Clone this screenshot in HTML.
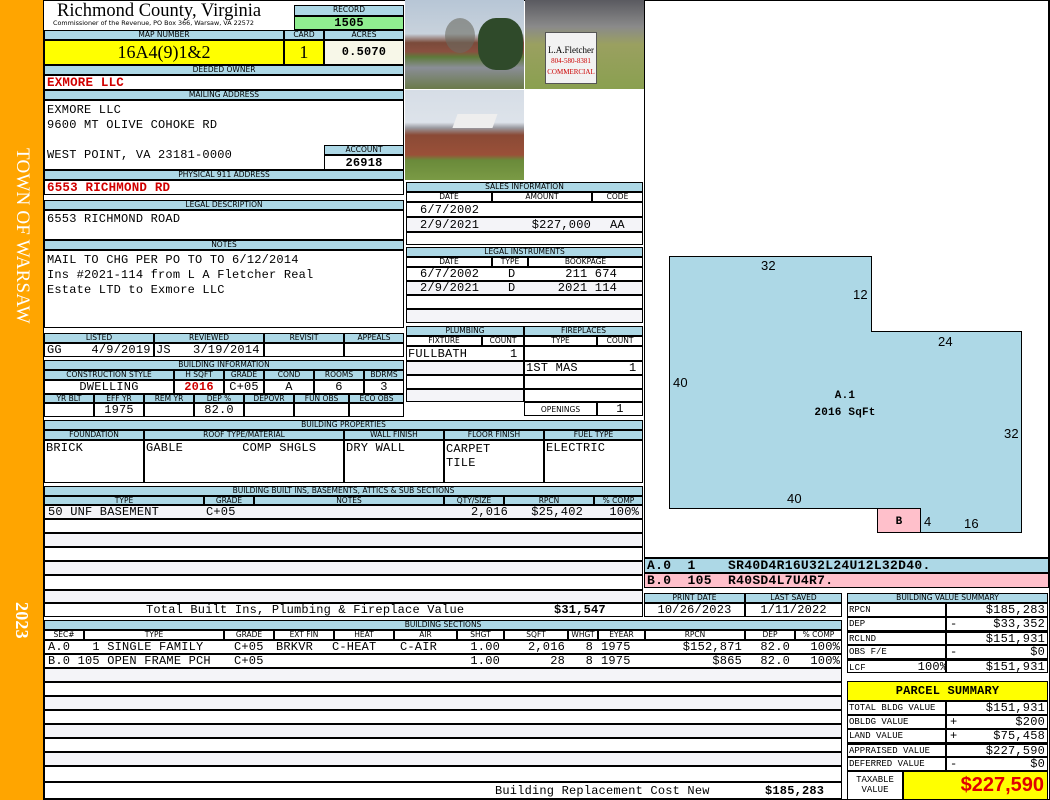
<!DOCTYPE html>
<html><head><meta charset="utf-8"><style>
*{margin:0;padding:0;box-sizing:border-box}
body{width:1050px;height:800px;background:#fff;position:relative;overflow:hidden;font-family:"Liberation Mono",monospace;font-size:12px;letter-spacing:.2px;color:#000}
div{position:absolute}
.h{background:#add8e6;border:1px solid #000;font:7.5px "DejaVu Sans",sans-serif;letter-spacing:0;text-align:center;line-height:8px;white-space:nowrap;overflow:hidden}
.b{border:1px solid #000;background:#fff}
.s{background:#f4f4f8;border:1px solid #000}
.m{font-family:"Liberation Mono",monospace;font-size:12px;white-space:pre;line-height:13px}
.t{font-family:"Liberation Mono",monospace;font-size:12px;white-space:pre;line-height:14px}
.r{color:#d00000;font-weight:bold}
.c{text-align:center}.R{text-align:right}
.sm{font-size:9px;letter-spacing:0}
</style></head><body>
<div style="left:0;top:0;width:43px;height:800px;background:#ffa500"></div>
<div style="left:10px;top:148px;width:24px;height:230px;writing-mode:vertical-rl;color:#fff;font:19px 'Liberation Serif',serif;line-height:24px">TOWN OF WARSAW</div>
<div style="left:10px;top:602px;width:24px;height:60px;writing-mode:vertical-rl;color:#fff;font:bold 18px 'Liberation Serif',serif;line-height:24px">2023</div>
<div style="left:43px;top:0;width:1007px;height:800px;border:1px solid #000"></div>

<div style="left:57px;top:1px;font:18.5px 'Liberation Serif',serif;letter-spacing:0;white-space:nowrap">Richmond County, Virginia</div>
<div style="left:53px;top:19px;font:6.4px 'DejaVu Sans',sans-serif;letter-spacing:0;white-space:nowrap">Commissioner of the Revenue, PO Box 366, Warsaw, VA 22572</div>
<div class="h" style="left:294px;top:5px;width:110px;height:11px">RECORD</div>
<div style="left:294px;top:16px;width:110px;height:14px;background:#90ee90;border:1px solid #000;font:bold 12px 'Liberation Mono',monospace;text-align:center;line-height:12px">1505</div>
<div class="h" style="left:44px;top:30px;width:240px;height:10px">MAP NUMBER</div>
<div class="h" style="left:284px;top:30px;width:40px;height:10px">CARD</div>
<div class="h" style="left:324px;top:30px;width:80px;height:10px">ACRES</div>
<div style="left:44px;top:40px;width:240px;height:25px;background:#ff0;border:1px solid #000;font:18px 'Liberation Serif',serif;letter-spacing:0;text-align:center;line-height:23px">16A4(9)1&amp;2</div>
<div style="left:284px;top:40px;width:40px;height:25px;background:#ff0;border:1px solid #000;font:18px 'Liberation Serif',serif;text-align:center;line-height:23px">1</div>
<div style="left:324px;top:40px;width:80px;height:25px;background:#f7f7e8;border:1px solid #000;font:bold 12px 'Liberation Mono',monospace;text-align:center;line-height:23px">0.5070</div>
<div class="h" style="left:44px;top:65px;width:360px;height:10px">DEEDED OWNER</div>
<div class="b m r" style="left:44px;top:75px;width:360px;height:15px;padding-left:2px;line-height:14px;font-size:12.5px">EXMORE LLC</div>
<div class="h" style="left:44px;top:90px;width:360px;height:10px">MAILING ADDRESS</div>
<div class="b m" style="left:44px;top:100px;width:360px;height:70px;padding:2px 2px;line-height:15px">EXMORE LLC
9600 MT OLIVE COHOKE RD

WEST POINT, VA 23181-0000</div>
<div class="h" style="left:324px;top:145px;width:80px;height:10px">ACCOUNT</div>
<div class="b m" style="left:324px;top:155px;width:80px;height:15px;font-weight:bold;text-align:center;line-height:14px">26918</div>
<div class="h" style="left:44px;top:170px;width:360px;height:10px">PHYSICAL 911 ADDRESS</div>
<div class="b m r" style="left:44px;top:180px;width:360px;height:15px;padding-left:2px;line-height:14px;font-size:12.5px">6553 RICHMOND RD</div>
<div class="h" style="left:44px;top:200px;width:360px;height:10px">LEGAL DESCRIPTION</div>
<div class="b m" style="left:44px;top:210px;width:360px;height:30px;padding:2px">6553 RICHMOND ROAD</div>
<div class="h" style="left:44px;top:240px;width:360px;height:10px">NOTES</div>
<div class="b m" style="left:44px;top:250px;width:360px;height:78px;padding:2px;line-height:15px">MAIL TO CHG PER PO TO TO 6/12/2014
Ins #2021-114 from L A Fletcher Real
Estate LTD to Exmore LLC</div>

<div class="h" style="left:44px;top:333px;width:110px;height:10px">LISTED</div>
<div class="h" style="left:154px;top:333px;width:110px;height:10px">REVIEWED</div>
<div class="h" style="left:264px;top:333px;width:80px;height:10px">REVISIT</div>
<div class="h" style="left:344px;top:333px;width:60px;height:10px">APPEALS</div>
<div class="b m" style="left:44px;top:343px;width:110px;height:14px;padding-left:2px">GG    4/9/2019</div>
<div class="b m" style="left:154px;top:343px;width:110px;height:14px;padding-left:1px">JS   3/19/2014</div>
<div class="b" style="left:264px;top:343px;width:80px;height:14px"></div>
<div class="b" style="left:344px;top:343px;width:60px;height:14px"></div>

<div class="h" style="left:44px;top:360px;width:360px;height:10px">BUILDING INFORMATION</div>
<div class="h" style="left:44px;top:370px;width:130px;height:10px">CONSTRUCTION STYLE</div>
<div class="h" style="left:174px;top:370px;width:50px;height:10px">H SQFT</div>
<div class="h" style="left:224px;top:370px;width:40px;height:10px">GRADE</div>
<div class="h" style="left:264px;top:370px;width:50px;height:10px">COND</div>
<div class="h" style="left:314px;top:370px;width:50px;height:10px">ROOMS</div>
<div class="h" style="left:364px;top:370px;width:40px;height:10px">BDRMS</div>
<div class="b m c" style="left:44px;top:380px;width:130px;height:14px">DWELLING</div>
<div class="b m c r" style="left:174px;top:380px;width:50px;height:14px">2016</div>
<div class="b m c" style="left:224px;top:380px;width:40px;height:14px">C+05</div>
<div class="b m c" style="left:264px;top:380px;width:50px;height:14px">A</div>
<div class="b m c" style="left:314px;top:380px;width:50px;height:14px">6</div>
<div class="b m c" style="left:364px;top:380px;width:40px;height:14px">3</div>
<div class="h" style="left:44px;top:394px;width:50px;height:9px">YR BLT</div>
<div class="h" style="left:94px;top:394px;width:50px;height:9px">EFF YR</div>
<div class="h" style="left:144px;top:394px;width:50px;height:9px">REM YR</div>
<div class="h" style="left:194px;top:394px;width:50px;height:9px">DEP %</div>
<div class="h" style="left:244px;top:394px;width:50px;height:9px">DEPOVR</div>
<div class="h" style="left:294px;top:394px;width:55px;height:9px">FUN OBS</div>
<div class="h" style="left:349px;top:394px;width:55px;height:9px">ECO OBS</div>
<div class="b" style="left:44px;top:403px;width:50px;height:14px"></div>
<div class="b m c" style="left:94px;top:403px;width:50px;height:14px">1975</div>
<div class="b" style="left:144px;top:403px;width:50px;height:14px"></div>
<div class="b m c" style="left:194px;top:403px;width:50px;height:14px">82.0</div>
<div class="b" style="left:244px;top:403px;width:50px;height:14px"></div>
<div class="b" style="left:294px;top:403px;width:55px;height:14px"></div>
<div class="b" style="left:349px;top:403px;width:55px;height:14px"></div>

<div class="h" style="left:44px;top:420px;width:599px;height:10px">BUILDING PROPERTIES</div>
<div class="h" style="left:44px;top:430px;width:100px;height:10px">FOUNDATION</div>
<div class="h" style="left:144px;top:430px;width:200px;height:10px">ROOF TYPE/MATERIAL</div>
<div class="h" style="left:344px;top:430px;width:100px;height:10px">WALL FINISH</div>
<div class="h" style="left:444px;top:430px;width:100px;height:10px">FLOOR FINISH</div>
<div class="h" style="left:544px;top:430px;width:99px;height:10px">FUEL TYPE</div>
<div class="b m" style="left:44px;top:440px;width:100px;height:43px;padding:1px">BRICK</div>
<div class="b m" style="left:144px;top:440px;width:200px;height:43px;padding:1px">GABLE        COMP SHGLS</div>
<div class="b m" style="left:344px;top:440px;width:100px;height:43px;padding:1px">DRY WALL</div>
<div class="b m" style="left:444px;top:440px;width:100px;height:43px;padding:1px;line-height:14px">CARPET
TILE</div>
<div class="b m" style="left:544px;top:440px;width:99px;height:43px;padding:1px">ELECTRIC</div>

<div class="h" style="left:44px;top:486px;width:599px;height:10px">BUILDING BUILT INS, BASEMENTS, ATTICS &amp; SUB SECTIONS</div>
<div class="h" style="left:44px;top:496px;width:160px;height:9px">TYPE</div>
<div class="h" style="left:204px;top:496px;width:50px;height:9px">GRADE</div>
<div class="h" style="left:254px;top:496px;width:190px;height:9px">NOTES</div>
<div class="h" style="left:444px;top:496px;width:60px;height:9px">QTY/SIZE</div>
<div class="h" style="left:504px;top:496px;width:90px;height:9px">RPCN</div>
<div class="h" style="left:594px;top:496px;width:49px;height:9px">% COMP</div>
<div class="s" style="left:44px;top:505px;width:599px;height:14px"></div>
<div class="t" style="left:48px;top:505px">50 UNF BASEMENT</div>
<div class="t" style="left:206px;top:505px">C+05</div>
<div class="t R" style="left:400px;top:505px;width:108px">2,016</div>
<div class="t R" style="left:480px;top:505px;width:103px">$25,402</div>
<div class="t R" style="left:580px;top:505px;width:59px">100%</div>
<div class="b" style="left:44px;top:519px;width:599px;height:14px"></div>
<div class="s" style="left:44px;top:533px;width:599px;height:14px"></div>
<div class="b" style="left:44px;top:547px;width:599px;height:14px"></div>
<div class="s" style="left:44px;top:561px;width:599px;height:14px"></div>
<div class="b" style="left:44px;top:575px;width:599px;height:15px"></div>
<div class="s" style="left:44px;top:590px;width:599px;height:13px"></div>
<div class="b" style="left:44px;top:603px;width:599px;height:14px"></div>
<div class="t" style="left:146px;top:603px">Total Built Ins, Plumbing &amp; Fireplace Value</div>
<div class="t" style="left:554px;top:603px;font-weight:bold">$31,547</div>

<!-- photos -->
<div style="left:405px;top:0;width:119px;height:89px;background:linear-gradient(#b7c6d6 0,#c8d2dc 38%,#7a4a3a 48%,#8a5040 58%,#5e7a3a 64%,#8a8e96 76%,#6a7a4a 100%)"></div>
<div style="left:445px;top:18px;width:30px;height:35px;background:#6a6a60;border-radius:50%;opacity:.6"></div>
<div style="left:478px;top:18px;width:45px;height:52px;background:#2f4a2a;border-radius:40%"></div>
<div style="left:525px;top:0;width:119px;height:89px;background:linear-gradient(#5a5a60 0,#8a8a8a 30%,#9aa060 50%,#8aa050 100%)"></div>
<div style="left:545px;top:32px;width:52px;height:52px;background:#f2f2f2;border:1px solid #555;font:9px 'Liberation Serif',serif;letter-spacing:0;text-align:center;padding-top:12px;line-height:10px">L.A.Fletcher<br><span style="color:#c00;font-size:7px">804-580-8381<br>COMMERCIAL</span></div>
<div style="left:405px;top:90px;width:119px;height:90px;background:linear-gradient(#d6dde6 0,#dde3ea 36%,#9a9aa0 42%,#8a4a36 50%,#9a5038 72%,#6a8a3a 78%,#7a9a45 100%)"></div>
<div style="left:455px;top:114px;width:40px;height:14px;background:#eee;transform:skewX(-20deg)"></div>

<div class="h" style="left:406px;top:182px;width:237px;height:10px">SALES INFORMATION</div>
<div class="h" style="left:406px;top:192px;width:86px;height:10px;background:#fff">DATE</div>
<div class="h" style="left:492px;top:192px;width:100px;height:10px;background:#fff">AMOUNT</div>
<div class="h" style="left:592px;top:192px;width:51px;height:10px;background:#fff">CODE</div>
<div class="b" style="left:406px;top:202px;width:237px;height:15px"></div>
<div class="s" style="left:406px;top:217px;width:237px;height:15px"></div>
<div class="t" style="left:420px;top:203px">6/7/2002</div>
<div class="t" style="left:420px;top:218px">2/9/2021</div>
<div class="t R" style="left:500px;top:218px;width:91px">$227,000</div>
<div class="t" style="left:610px;top:218px">AA</div>
<div class="b" style="left:406px;top:232px;width:237px;height:13px"></div>
<div class="h" style="left:406px;top:247px;width:237px;height:10px">LEGAL INSTRUMENTS</div>
<div class="h" style="left:406px;top:257px;width:86px;height:10px;background:#fff">DATE</div>
<div class="h" style="left:492px;top:257px;width:36px;height:10px;background:#fff">TYPE</div>
<div class="h" style="left:528px;top:257px;width:115px;height:10px;background:#fff">BOOKPAGE</div>
<div class="b" style="left:406px;top:267px;width:237px;height:14px"></div>
<div class="s" style="left:406px;top:281px;width:237px;height:14px"></div>
<div class="t" style="left:420px;top:267px">6/7/2002</div>
<div class="t" style="left:420px;top:281px">2/9/2021</div>
<div class="t" style="left:508px;top:267px">D</div>
<div class="t" style="left:508px;top:281px">D</div>
<div class="t R" style="left:520px;top:267px;width:97px">211 674</div>
<div class="t R" style="left:520px;top:281px;width:97px">2021 114</div>
<div class="b" style="left:406px;top:295px;width:237px;height:14px"></div>
<div class="s" style="left:406px;top:309px;width:237px;height:14px"></div>

<div class="h" style="left:406px;top:326px;width:118px;height:10px">PLUMBING</div>
<div class="h" style="left:524px;top:326px;width:119px;height:10px">FIREPLACES</div>
<div class="h" style="left:406px;top:336px;width:76px;height:10px;background:#fff">FIXTURE</div>
<div class="h" style="left:482px;top:336px;width:42px;height:10px;background:#fff">COUNT</div>
<div class="h" style="left:524px;top:336px;width:73px;height:10px;background:#fff">TYPE</div>
<div class="h" style="left:597px;top:336px;width:46px;height:10px;background:#fff">COUNT</div>
<div class="b" style="left:406px;top:346px;width:118px;height:15px"></div>
<div class="t" style="left:408px;top:347px">FULLBATH</div><div class="t" style="left:510px;top:347px">1</div>
<div class="b" style="left:524px;top:346px;width:119px;height:15px"></div>
<div class="s" style="left:406px;top:361px;width:118px;height:14px"></div>
<div class="b" style="left:524px;top:361px;width:119px;height:14px"></div>
<div class="t" style="left:526px;top:361px">1ST MAS</div><div class="t" style="left:629px;top:361px">1</div>
<div class="b" style="left:406px;top:375px;width:118px;height:14px"></div>
<div class="b" style="left:524px;top:375px;width:119px;height:14px"></div>
<div class="s" style="left:406px;top:389px;width:118px;height:13px"></div>
<div class="b" style="left:524px;top:389px;width:119px;height:13px"></div>
<div class="b" style="left:524px;top:402px;width:73px;height:14px;font:7.5px 'DejaVu Sans',sans-serif;letter-spacing:0;text-align:center;line-height:13px">OPENINGS</div>
<div class="b m c" style="left:597px;top:402px;width:46px;height:14px">1</div>

<div style="left:644px;top:0;width:405px;height:558px;border:1px solid #000;background:#fff"></div>
<svg style="position:absolute;left:0;top:0" width="1050" height="800">
<polygon points="669.5,256.5 871.5,256.5 871.5,331.5 1021.5,331.5 1021.5,532.5 920.5,532.5 920.5,508.5 669.5,508.5" fill="#add8e6" stroke="#000"/>
<rect x="877.5" y="508.5" width="43" height="24" fill="#ffc0cb" stroke="#000"/>
<g font-family="Liberation Sans, sans-serif" font-size="13">
<text x="761" y="270">32</text><text x="853" y="299">12</text><text x="938" y="346">24</text>
<text x="673" y="387">40</text><text x="1004" y="438">32</text><text x="787" y="503">40</text>
<text x="924" y="526">4</text><text x="964" y="528">16</text></g>
<g font-family="Liberation Mono, monospace" font-size="11" font-weight="bold" text-anchor="middle">
<text x="845" y="398">A.1</text><text x="845" y="415">2016 SqFt</text>
<text x="899" y="524">B</text></g>
</svg>
<div class="m" style="left:644px;top:558px;width:405px;height:15px;background:#add8e6;border:1px solid #000;padding-left:2px;font-weight:bold;line-height:14px;font-size:13px;letter-spacing:.3px">A.0  1    SR40D4R16U32L24U12L32D40.</div>
<div class="m" style="left:644px;top:573px;width:405px;height:15px;background:#ffc0cb;border:1px solid #000;padding-left:2px;font-weight:bold;line-height:14px;font-size:13px;letter-spacing:.3px">B.0  105  R40SD4L7U4R7.</div>

<div class="h" style="left:644px;top:593px;width:101px;height:10px">PRINT DATE</div>
<div class="h" style="left:745px;top:593px;width:97px;height:10px">LAST SAVED</div>
<div class="b m c" style="left:644px;top:603px;width:101px;height:14px;line-height:13px">10/26/2023</div>
<div class="b m c" style="left:745px;top:603px;width:97px;height:14px;line-height:13px">1/11/2022</div>

<div class="h" style="left:847px;top:593px;width:201px;height:10px">BUILDING VALUE SUMMARY</div>
<div class="b m sm" style="left:847px;top:603px;width:99px;height:14px;padding-left:1px">RPCN</div>
<div class="b m R" style="left:946px;top:603px;width:102px;height:14px;padding-right:2px">$185,283</div>
<div class="b m sm" style="left:847px;top:617px;width:99px;height:14px;padding-left:1px">DEP</div>
<div class="b m R" style="left:946px;top:617px;width:102px;height:14px;padding-right:2px"><span style="float:left;padding-left:3px">-</span>$33,352</div>
<div class="b m sm" style="left:847px;top:631px;width:99px;height:14px;padding-left:1px;border-top:2px solid #000">RCLND</div>
<div class="b m R" style="left:946px;top:631px;width:102px;height:14px;padding-right:2px;border-top:2px solid #000">$151,931</div>
<div class="b m sm" style="left:847px;top:645px;width:99px;height:14px;padding-left:1px">OBS F/E</div>
<div class="b m R" style="left:946px;top:645px;width:102px;height:14px;padding-right:2px"><span style="float:left;padding-left:3px">-</span>$0</div>
<div class="b m" style="left:847px;top:659px;width:99px;height:14px;padding-left:1px;border-top:2px solid #000"><span style="font-size:9px">LCF</span>       100%</div>
<div class="b m R" style="left:946px;top:659px;width:102px;height:14px;padding-right:2px;border-top:2px solid #000">$151,931</div>

<div style="left:847px;top:681px;width:201px;height:20px;background:#ff0;border:1px solid #000;font:bold 12px 'Liberation Mono',monospace;text-align:center;line-height:18px">PARCEL SUMMARY</div>
<div class="b m sm" style="left:847px;top:701px;width:99px;height:14px;padding-left:1px">TOTAL BLDG VALUE</div>
<div class="b m R" style="left:946px;top:701px;width:102px;height:14px;padding-right:2px">$151,931</div>
<div class="b m sm" style="left:847px;top:715px;width:99px;height:14px;padding-left:1px">OBLDG VALUE</div>
<div class="b m R" style="left:946px;top:715px;width:102px;height:14px;padding-right:2px"><span style="float:left;padding-left:3px">+</span>$200</div>
<div class="b m sm" style="left:847px;top:729px;width:99px;height:14px;padding-left:1px">LAND VALUE</div>
<div class="b m R" style="left:946px;top:729px;width:102px;height:14px;padding-right:2px"><span style="float:left;padding-left:3px">+</span>$75,458</div>
<div class="b m sm" style="left:847px;top:743px;width:99px;height:14px;padding-left:1px;border-top:2px solid #000">APPRAISED VALUE</div>
<div class="b m R" style="left:946px;top:743px;width:102px;height:14px;padding-right:2px;border-top:2px solid #000">$227,590</div>
<div class="b m sm" style="left:847px;top:757px;width:99px;height:14px;padding-left:1px">DEFERRED VALUE</div>
<div class="b m R" style="left:946px;top:757px;width:102px;height:14px;padding-right:2px"><span style="float:left;padding-left:3px">-</span>$0</div>
<div class="b m c sm" style="left:847px;top:771px;width:56px;height:29px;line-height:10px;padding-top:3px">TAXABLE
VALUE</div>
<div style="left:903px;top:771px;width:145px;height:29px;background:#ff0;border:1px solid #000;color:#e00000;font:bold 20px 'Liberation Sans',sans-serif;letter-spacing:0;text-align:right;padding-right:3px;line-height:27px">$227,590</div>

<div class="h" style="left:44px;top:620px;width:798px;height:10px">BUILDING SECTIONS</div>
<div class="h" style="left:44px;top:630px;width:40px;height:10px;background:#fff">SEC#</div>
<div class="h" style="left:84px;top:630px;width:140px;height:10px;background:#fff">TYPE</div>
<div class="h" style="left:224px;top:630px;width:50px;height:10px;background:#fff">GRADE</div>
<div class="h" style="left:274px;top:630px;width:60px;height:10px;background:#fff">EXT FIN</div>
<div class="h" style="left:334px;top:630px;width:60px;height:10px;background:#fff">HEAT</div>
<div class="h" style="left:394px;top:630px;width:63px;height:10px;background:#fff">AIR</div>
<div class="h" style="left:457px;top:630px;width:47px;height:10px;background:#fff">SHGT</div>
<div class="h" style="left:504px;top:630px;width:64px;height:10px;background:#fff">SQFT</div>
<div class="h" style="left:568px;top:630px;width:30px;height:10px;background:#fff">WHGT</div>
<div class="h" style="left:598px;top:630px;width:47px;height:10px;background:#fff">EYEAR</div>
<div class="h" style="left:645px;top:630px;width:100px;height:10px;background:#fff">RPCN</div>
<div class="h" style="left:745px;top:630px;width:50px;height:10px;background:#fff">DEP</div>
<div class="h" style="left:795px;top:630px;width:47px;height:10px;background:#fff">% COMP</div>
<div class="b" style="left:44px;top:640px;width:798px;height:14px"></div>
<div class="b" style="left:44px;top:654px;width:798px;height:14px"></div>
<div class="t" style="left:48px;top:640px">A.0   1 SINGLE FAMILY</div>
<div class="t" style="left:48px;top:654px">B.0 105 OPEN FRAME PCH</div>
<div class="t" style="left:234px;top:640px">C+05</div>
<div class="t" style="left:234px;top:654px">C+05</div>
<div class="t" style="left:276px;top:640px">BRKVR</div>
<div class="t" style="left:332px;top:640px">C-HEAT</div>
<div class="t" style="left:400px;top:640px">C-AIR</div>
<div class="t R" style="left:440px;top:640px;width:60px">1.00</div>
<div class="t R" style="left:440px;top:654px;width:60px">1.00</div>
<div class="t R" style="left:505px;top:640px;width:60px">2,016</div>
<div class="t R" style="left:505px;top:654px;width:60px">28</div>
<div class="t R" style="left:570px;top:640px;width:23px">8</div>
<div class="t R" style="left:570px;top:654px;width:23px">8</div>
<div class="t" style="left:601px;top:640px">1975</div>
<div class="t" style="left:601px;top:654px">1975</div>
<div class="t R" style="left:650px;top:640px;width:92px">$152,871</div>
<div class="t R" style="left:650px;top:654px;width:92px">$865</div>
<div class="t R" style="left:745px;top:640px;width:45px">82.0</div>
<div class="t R" style="left:745px;top:654px;width:45px">82.0</div>
<div class="t R" style="left:795px;top:640px;width:45px">100%</div>
<div class="t R" style="left:795px;top:654px;width:45px">100%</div>
<div class="s" style="left:44px;top:668px;width:798px;height:14px"></div>
<div class="b" style="left:44px;top:682px;width:798px;height:14px"></div>
<div class="s" style="left:44px;top:696px;width:798px;height:14px"></div>
<div class="b" style="left:44px;top:710px;width:798px;height:14px"></div>
<div class="s" style="left:44px;top:724px;width:798px;height:14px"></div>
<div class="b" style="left:44px;top:738px;width:798px;height:14px"></div>
<div class="s" style="left:44px;top:752px;width:798px;height:14px"></div>
<div class="b" style="left:44px;top:766px;width:798px;height:16px"></div>
<div class="b" style="left:44px;top:782px;width:798px;height:17px"></div>
<div class="t" style="left:495px;top:783px;line-height:16px">Building Replacement Cost New</div>
<div class="t" style="left:765px;top:783px;line-height:16px;font-weight:bold">$185,283</div>
</body></html>
